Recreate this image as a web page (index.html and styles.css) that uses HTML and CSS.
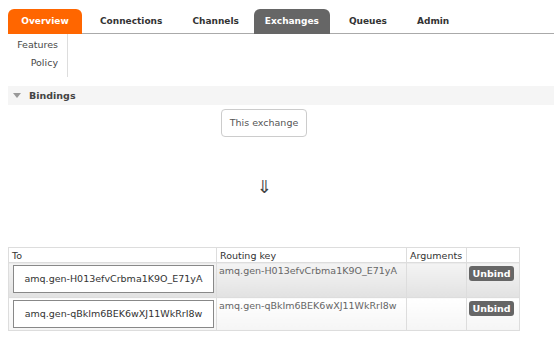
FILE: index.html
```html
<!DOCTYPE html>
<html lang="en">
  <head>
    <meta charset="UTF-8" />
    <title>RabbitMQ Management - Exchange</title>
    <link rel="stylesheet" href="styles.css">
  </head>
  <body>
    <div class="page">
      <!-- main tabs -->
      <ul class="tabs">
        <li class="tab tab-overview">Overview</li>
        <li class="tab">Connections</li>
        <li class="tab">Channels</li>
        <li class="tab tab-active">Exchanges</li>
        <li class="tab">Queues</li>
        <li class="tab">Admin</li>
      </ul>

      <!-- sub menu -->
      <div class="submenu">
        <ul class="submenu-list">
          <li>Features</li>
          <li>Policy</li>
        </ul>
      </div>

      <!-- bindings section -->
      <div class="section-header">
        <span class="triangle"></span>
        <span class="section-title">Bindings</span>
      </div>

      <div class="bindings">
        <div class="this-exchange">This exchange</div>
        <div class="arrow">&#8659;</div>

        <table class="list">
          <thead>
            <tr>
              <th class="col-to">To</th>
              <th class="col-key">Routing key</th>
              <th class="col-args">Arguments</th>
              <th class="col-action"></th>
            </tr>
          </thead>
          <tbody>
            <tr class="row-alt1">
              <td><span class="queue-box">amq.gen-H013efvCrbma1K9O_E71yA</span></td>
              <td class="key">amq.gen-H013efvCrbma1K9O_E71yA</td>
              <td></td>
              <td><button class="btn">Unbind</button></td>
            </tr>
            <tr class="row-alt2">
              <td><span class="queue-box">amq.gen-qBkIm6BEK6wXJ11WkRrI8w</span></td>
              <td class="key">amq.gen-qBkIm6BEK6wXJ11WkRrI8w</td>
              <td></td>
              <td><button class="btn">Unbind</button></td>
            </tr>
          </tbody>
        </table>
      </div>
    </div>
  </body>
</html>
```

FILE: styles.css
```css
* {
  margin: 0;
  padding: 0;
  box-sizing: border-box;
}

body {
  font-family: "DejaVu Sans", Verdana, sans-serif;
  font-size: 9.5px;
  color: #484848;
  background: #fff;
  overflow: hidden;
}

.page {
  padding-left: 8px;
}

/* tabs */
.tabs {
  list-style: none;
  display: flex;
  margin-top: 9px;
  border-bottom: 1px solid #aaa;
  height: 25px;
}

.tab {
  height: 24px;
  line-height: 25px;
  padding: 0 15px;
  font-weight: bold;
  font-size: 9px;
  color: #333;
}

.tab-overview {
  background: #f60;
  color: #fff;
  border-radius: 6px 6px 0 0;
  height: 25px;
  width: 74px;
  padding: 0;
  text-align: center;
  margin-right: 3px;
}

.tab-active {
  background: #666;
  color: #fff;
  border-radius: 6px 6px 0 0;
  height: 25px;
  padding: 0 11px;
  margin-right: 4px;
}

/* sub menu */
.submenu {
  display: flex;
  height: 43px;
}

.submenu-list {
  list-style: none;
  width: 60px;
  border-right: 1px solid #ddd;
  text-align: right;
  padding-top: 4px;
  padding-right: 9px;
}

.submenu-list li {
  height: 18px;
  line-height: 14px;
  color: #484848;
}

/* bindings */
.section-header {
  margin-top: 9px;
  background: #f5f5f5;
  height: 19px;
  display: flex;
  align-items: center;
  padding-left: 5px;
}

.triangle {
  width: 0;
  height: 0;
  border-left: 4px solid transparent;
  border-right: 4px solid transparent;
  border-top: 5px solid #999;
  margin-right: 8px;
}

.section-title {
  font-weight: bold;
  color: #444;
}

.bindings {
  width: 512px;
  display: flex;
  flex-direction: column;
  align-items: center;
}

.this-exchange {
  margin-top: 4px;
  border: 1px solid #ccc;
  border-radius: 4px;
  height: 28px;
  line-height: 26px;
  padding: 0 8px;
  color: #555;
}

.arrow {
  margin-top: 38px;
  font-family: "DejaVu Sans", sans-serif;
  font-size: 18px;
  line-height: 24px;
  color: #444;
  height: 24px;
}

.list {
  margin-top: 48px;
  width: 512px;
  border-collapse: collapse;
  border: 1px solid #ddd;
  table-layout: fixed;
}

.list th {
  text-align: left;
  font-weight: normal;
  color: #333;
  height: 15px;
  padding: 0 3px;
  border: 1px solid #ddd;
  background: #fff;
}

.col-to { width: 208px; }
.col-key { width: 190px; }
.col-args { width: 60px; }

.list td {
  border: 1px solid #ddd;
  vertical-align: top;
  padding: 2px 2px;
  white-space: nowrap;
}

.row-alt1 td {
  background: linear-gradient(#f4f4f4, #e2e2e2);
  height: 35px;
}

.row-alt2 td {
  background: linear-gradient(#fff, #f5f5f5);
  height: 33px;
}

.queue-box {
  display: block;
  border: 1px solid #888;
  background: #fff;
  height: 28px;
  line-height: 26px;
  text-align: center;
  color: #333;
  width: 201px;
  margin-left: 2px;
}

.key {
  color: #666;
}

.btn {
  font-family: inherit;
  font-size: 9.5px;
  font-weight: bold;
  color: #fff;
  background: #666;
  border: none;
  border-radius: 3px;
  height: 15px;
  width: 45px;
  margin-top: 1px;
}
```
